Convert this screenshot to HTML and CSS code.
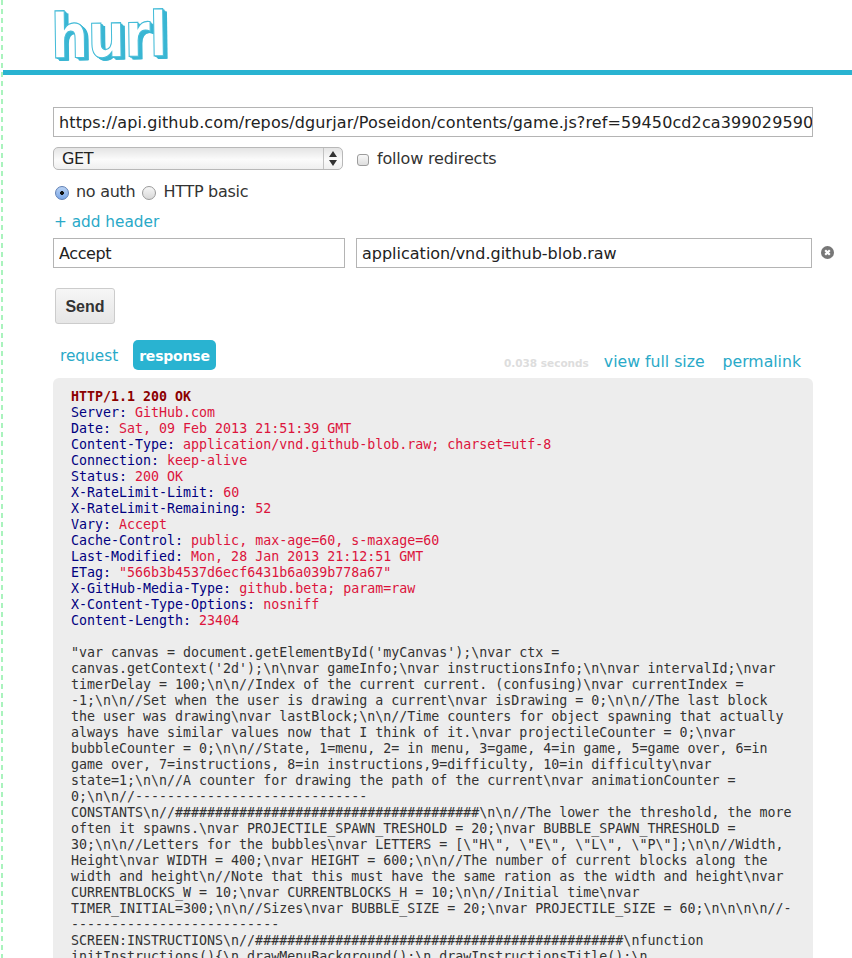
FILE: index.html
```html
<!DOCTYPE html>
<html lang="en">
<head>
<meta charset="utf-8">
<title>hurl</title>
<link rel="stylesheet" href="styles.css">
</head>
<body>
<header class="masthead">
  <a class="logo" href="#">hurl</a>
</header>
<main class="content">
  <form class="request-form">
    <input class="field url" type="text" value="https://api.github.com/repos/dgurjar/Poseidon/contents/game.js?ref=59450cd2ca399029590">
    <div class="row method-row">
      <div class="select-wrap">
        <select class="method"><option>GET</option></select>
        <span class="select-arrows">
          <svg width="8" height="15" viewBox="0 0 8 15"><path d="M4 0 8 6H0ZM0 9H8L4 15Z" fill="#333"/></svg>
        </span>
      </div>
      <label class="check"><input class="checkbox" type="checkbox"><span>follow redirects</span></label>
    </div>
    <div class="row auth-row">
      <label class="radio-label"><input class="radio" type="radio" name="auth" checked><span>no auth</span></label>
      <label class="radio-label"><input class="radio" type="radio" name="auth"><span>HTTP basic</span></label>
    </div>
    <a class="link add-header" href="#">+ add header</a>
    <div class="row header-row">
      <input class="field header-name" type="text" value="Accept">
      <input class="field header-value" type="text" value="application/vnd.github-blob.raw">
      <svg class="remove" width="13" height="13" viewBox="0 0 13 13"><circle cx="6.5" cy="6.5" r="6.5" fill="#777"/><path d="M4.2 4.2 8.8 8.8M8.8 4.2 4.2 8.8" stroke="#fff" stroke-width="2.2"/></svg>
    </div>
    <button class="send" type="button">Send</button>
  </form>
  <nav class="tabs">
    <a class="link tab" href="#">request</a>
    <a class="tab active" href="#">response</a>
    <span class="spacer"></span>
    <span class="timing">0.038 seconds</span>
    <a class="link action" href="#">view full size</a>
    <a class="link action" href="#">permalink</a>
  </nav>
  <pre class="response"><strong class="status">HTTP/1.1 200 OK</strong>
<span class="k">Server:</span> <span class="v">GitHub.com</span>
<span class="k">Date:</span> <span class="v">Sat, 09 Feb 2013 21:51:39 GMT</span>
<span class="k">Content-Type:</span> <span class="v">application/vnd.github-blob.raw; charset=utf-8</span>
<span class="k">Connection:</span> <span class="v">keep-alive</span>
<span class="k">Status:</span> <span class="v">200 OK</span>
<span class="k">X-RateLimit-Limit:</span> <span class="v">60</span>
<span class="k">X-RateLimit-Remaining:</span> <span class="v">52</span>
<span class="k">Vary:</span> <span class="v">Accept</span>
<span class="k">Cache-Control:</span> <span class="v">public, max-age=60, s-maxage=60</span>
<span class="k">Last-Modified:</span> <span class="v">Mon, 28 Jan 2013 21:12:51 GMT</span>
<span class="k">ETag:</span> <span class="v">"566b3b4537d6ecf6431b6a039b778a67"</span>
<span class="k">X-GitHub-Media-Type:</span> <span class="v">github.beta; param=raw</span>
<span class="k">X-Content-Type-Options:</span> <span class="v">nosniff</span>
<span class="k">Content-Length:</span> <span class="v">23404</span>

"var canvas = document.getElementById('myCanvas');\nvar ctx = 
canvas.getContext('2d');\n\nvar gameInfo;\nvar instructionsInfo;\n\nvar intervalId;\nvar 
timerDelay = 100;\n\n//Index of the current current. (confusing)\nvar currentIndex = 
-1;\n\n//Set when the user is drawing a current\nvar isDrawing = 0;\n\n//The last block 
the user was drawing\nvar lastBlock;\n\n//Time counters for object spawning that actually 
always have similar values now that I think of it.\nvar projectileCounter = 0;\nvar 
bubbleCounter = 0;\n\n//State, 1=menu, 2= in menu, 3=game, 4=in game, 5=game over, 6=in 
game over, 7=instructions, 8=in instructions,9=difficulty, 10=in difficulty\nvar 
state=1;\n\n//A counter for drawing the path of the current\nvar animationCounter = 
0;\n\n//-----------------------------
CONSTANTS\n//######################################\n\n//The lower the threshold, the more 
often it spawns.\nvar PROJECTILE_SPAWN_TRESHOLD = 20;\nvar BUBBLE_SPAWN_THRESHOLD = 
30;\n\n//Letters for the bubbles\nvar LETTERS = [\"H\", \"E\", \"L\", \"P\"];\n\n//Width, 
Height\nvar WIDTH = 400;\nvar HEIGHT = 600;\n\n//The number of current blocks along the 
width and height\n//Note that this must have the same ration as the width and height\nvar 
CURRENTBLOCKS_W = 10;\nvar CURRENTBLOCKS_H = 10;\n\n//Initial time\nvar 
TIMER_INITIAL=300;\n\n//Sizes\nvar BUBBLE_SIZE = 20;\nvar PROJECTILE_SIZE = 60;\n\n\n\n//-
--------------------------
SCREEN:INSTRUCTIONS\n//##############################################\nfunction 
initInstructions(){\n drawMenuBackground();\n drawInstructionsTitle();\n </pre>
</main>
</body>
</html>
```
FILE: styles.css
```css
* { box-sizing: border-box; }
html, body { height: 100%; overflow: hidden; }
body {
  margin: 0;
  padding-left: 3px;
  background-color: #fff;
  background-image: repeating-linear-gradient(to bottom, #a9f3bd 0, #a9f3bd 5px, transparent 5px, transparent 9px);
  background-size: 2px 100%;
  background-position: 1px 0;
  background-repeat: no-repeat;
  color: #333;
  font-family: "DejaVu Sans", sans-serif;
  font-size: 16px;
}
.masthead {
  height: 75px;
  padding: 0 0 0 48px;
  border-bottom: 5px solid #29b3d1;
}
.logo {
  display: inline-block;
  color: #fff;
  font-family: "DejaVu Sans", sans-serif;
  font-weight: 700;
  font-size: 62px;
  line-height: 70px;
  letter-spacing: -1px;
  text-decoration: none;
  -webkit-text-stroke: 1.2px #45bcd8;
  text-shadow: 1px 1px 0 #3ab6d3, 2px 1px 0 #3ab6d3, 3px 2px 0 #3ab6d3, 4px 3px 0 #3ab6d3, 5px 3px 0 #3ab6d3;
  transform: translateY(2px) scaleX(.85) rotate(-1deg);
  transform-origin: 0 50%;
}
.content { padding: 32px 0 0 50px; }
.link { color: #29a9c8; text-decoration: none; }
.request-form { display: flex; flex-direction: column; align-items: flex-start; }
.row { display: flex; align-items: center; }
.field {
  height: 30px;
  border: 1px solid #b4b4b4;
  padding: 0 5px;
  color: #222;
  font: inherit;
  background: #fff;
  border-radius: 0;
  outline: 0;
}
.url { width: 760px; letter-spacing: .11px; padding-right: 0; }
.method-row { margin-top: 10px; height: 23px; }
.select-wrap { position: relative; width: 290px; height: 23px; }
.method {
  appearance: none;
  display: block;
  width: 100%;
  height: 100%;
  border: 1px solid #b8b8b8;
  border-radius: 5px;
  padding: 0 0 0 8px;
  color: #222;
  font: inherit;
  letter-spacing: -.4px;
  background: linear-gradient(to bottom, #e4e4e4 0, #fbfbfb 55%, #efefef 100%);
}
.select-arrows {
  position: absolute;
  top: 1px; right: 1px; bottom: 1px;
  width: 19px;
  border-left: 1px solid #c2c2c2;
  display: flex;
  align-items: center;
  justify-content: center;
}
.check { display: flex; align-items: center; margin-left: 14px; letter-spacing: -.19px; }
.checkbox {
  appearance: none;
  width: 12px;
  height: 12px;
  margin: 2px 8px 0 0;
  border: 1px solid #9c9c9c;
  border-radius: 3px;
  background: linear-gradient(to bottom, #f8f8f8, #dedede);
}
.auth-row { margin-top: 10px; height: 22px; gap: 7px; letter-spacing: -.28px; }
.radio-label { display: flex; align-items: center; }
.radio-label:first-child { margin-left: 2px; }
.radio {
  appearance: none;
  width: 14px;
  height: 14px;
  margin: 4px 7px 0 0;
  border: 1px solid #9a9a9a;
  border-radius: 50%;
  background: linear-gradient(to bottom, #f6f6f6, #d8d8d8);
}
.radio:checked {
  border-color: #5f7fb5;
  background: radial-gradient(circle, #111 0, #111 1.6px, transparent 2.2px), linear-gradient(to bottom, #b9d2f3, #7ba8e8);
}
.add-header { margin-top: 10px; line-height: 20px; height: 20px; margin-left: 1px; font-size: 15.3px; }
.header-row { margin-top: 6px; }
.header-name { width: 292px; letter-spacing: -.4px; }
.header-value { width: 456px; margin-left: 11px; }
.remove { margin: -2px 0 0 9px; }
.send {
  margin: 20px 0 0 2px;
  width: 60px;
  height: 36px;
  padding: 2px 0 0;
  border: 1px solid #ccc;
  border-radius: 3px;
  color: #333;
  font-family: "Liberation Sans", sans-serif;
  font-weight: 700;
  font-size: 16px;
  background: linear-gradient(to bottom, #f6f6f6, #e6e6e6);
}
.tabs { display: flex; align-items: center; margin-top: 16px; height: 30px; width: 760px; }
.tab { padding: 0 7px; line-height: 33px; height: 30px; border-radius: 5px; margin-right: 8px; font-size: 15.3px; }
.active { padding: 0 6px; background: #29b3d1; color: #fff; font-weight: 700; font-size: 14px; letter-spacing: -.2px; line-height: 32px; text-decoration: none; }
.spacer { flex: 1; }
.timing { color: #ddd; font-size: 10.5px; font-weight: 700; margin: 15px 15px 0 0; }
.action { margin: 12px 0 0 0; font-size: 15.7px; }
.action:last-child { margin-left: 18px; margin-right: 12px; }
.response {
  margin: 8px 0 0;
  width: 760px;
  height: 620px;
  overflow: hidden;
  padding: 11px 18px;
  border-radius: 6px 6px 0 0;
  background: #ededed;
  font-family: "DejaVu Sans Mono", monospace;
  font-size: 13.3px;
  line-height: 16px;
  color: #333;
}
.status { color: #8b0000; }
.k { color: #000080; }
.v { color: #dc143c; }
```
